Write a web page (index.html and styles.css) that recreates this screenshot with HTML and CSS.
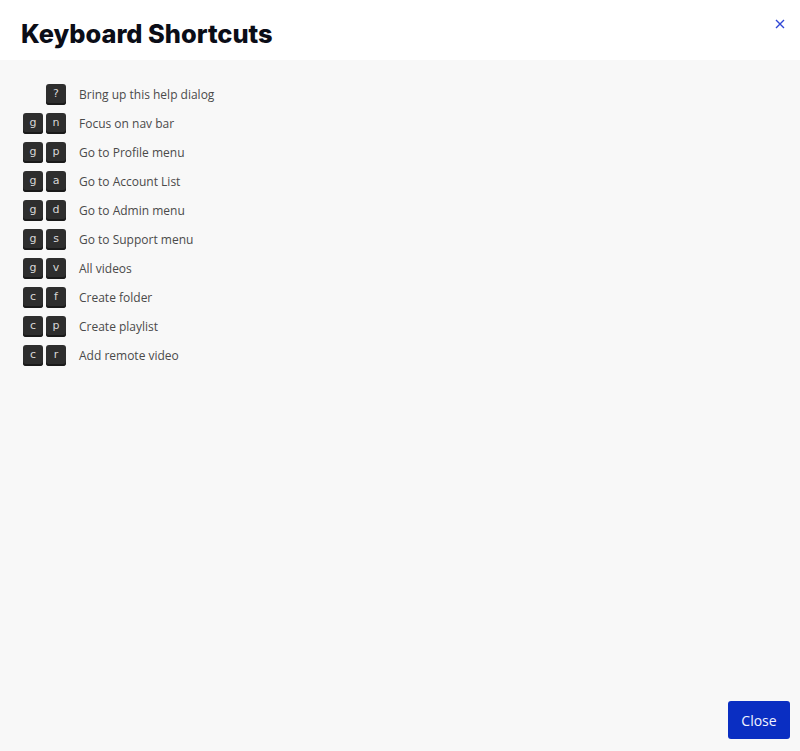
FILE: index.html
```html
<!DOCTYPE html>
<html>
<head>
<meta charset="utf-8">
<link rel="stylesheet" href="styles.css">
</head>
<body>
<div class="dialog">
  <header class="head">
    <h1 class="title">Keyboard Shortcuts</h1>
    <button class="x" aria-label="Close">
      <svg width="10" height="10" viewBox="0 0 10 10"><path d="M1 1L9 9M9 1L1 9" stroke="#3047d6" stroke-width="1.4" fill="none"/></svg>
    </button>
  </header>
  <main class="body">
    <ul class="list">
      <li class="row"><span class="keys"><kbd class="key">?</kbd></span><span class="desc">Bring up this help dialog</span></li>
      <li class="row"><span class="keys"><kbd class="key">g</kbd><kbd class="key">n</kbd></span><span class="desc">Focus on nav bar</span></li>
      <li class="row"><span class="keys"><kbd class="key">g</kbd><kbd class="key">p</kbd></span><span class="desc">Go to Profile menu</span></li>
      <li class="row"><span class="keys"><kbd class="key">g</kbd><kbd class="key">a</kbd></span><span class="desc">Go to Account List</span></li>
      <li class="row"><span class="keys"><kbd class="key">g</kbd><kbd class="key">d</kbd></span><span class="desc">Go to Admin menu</span></li>
      <li class="row"><span class="keys"><kbd class="key">g</kbd><kbd class="key">s</kbd></span><span class="desc">Go to Support menu</span></li>
      <li class="row"><span class="keys"><kbd class="key">g</kbd><kbd class="key">v</kbd></span><span class="desc">All videos</span></li>
      <li class="row"><span class="keys"><kbd class="key">c</kbd><kbd class="key">f</kbd></span><span class="desc">Create folder</span></li>
      <li class="row"><span class="keys"><kbd class="key">c</kbd><kbd class="key">p</kbd></span><span class="desc">Create playlist</span></li>
      <li class="row"><span class="keys"><kbd class="key">c</kbd><kbd class="key">r</kbd></span><span class="desc">Add remote video</span></li>
    </ul>
  </main>
  <footer class="foot">
    <button class="close">Close</button>
  </footer>
</div>
</body>
</html>
```
FILE: styles.css
```css
* { box-sizing: border-box; }
html, body { margin: 0; padding: 0; height: 100%; }
body {
  font-family: "Open Sans", "Liberation Sans", sans-serif;
  background: #f8f8f8;
}
.dialog {
  display: flex;
  flex-direction: column;
  height: 751px;
  width: 800px;
}
.head {
  height: 60px;
  background: #ffffff;
  display: flex;
  align-items: flex-start;
  justify-content: space-between;
  padding: 0 10px 0 21px;
}
.title {
  margin: 18px 0 0 0;
  font-family: "Inter", "Liberation Sans", sans-serif;
  font-weight: 800;
  font-size: 25.4px;
  letter-spacing: 0;
  line-height: 32px;
  color: #0b0d17;
}
.x {
  margin-top: 14px;
  border: 0;
  background: transparent;
  padding: 5px;
  width: 20px;
  height: 20px;
  display: flex;
  align-items: center;
  justify-content: center;
  cursor: pointer;
}
.body {
  flex: 1;
  padding: 24px 23px 0 23px;
}
.list {
  list-style: none;
  margin: 0;
  padding: 0;
  display: flex;
  flex-direction: column;
  gap: 8px;
}
.row {
  display: flex;
  align-items: center;
  height: 21px;
}
.keys {
  display: flex;
  justify-content: flex-end;
  gap: 3px;
  padding-right: 13px;
  box-sizing: content-box;
  width: 43px;
}
.key {
  width: 20px;
  height: 21px;
  border-radius: 3px;
  background: #2e2e2e;
  box-shadow: inset 0 -2px 0 #1a1a1a;
  color: #d8d8d8;
  font-family: "DejaVu Sans", sans-serif;
  font-size: 11px;
  display: flex;
  align-items: center;
  justify-content: center;
  padding-bottom: 2px;
}
.desc {
  font-size: 12px;
  color: #4a4a4a;
}
.foot {
  display: flex;
  justify-content: flex-end;
  padding: 0 10px 12px 0;
}
.close {
  width: 62px;
  height: 38px;
  border: 0;
  border-radius: 3px;
  background: #0a2ec2;
  color: #f2f4ff;
  font-family: "Open Sans", "Liberation Sans", sans-serif;
  font-size: 14px;
  cursor: pointer;
}
```
